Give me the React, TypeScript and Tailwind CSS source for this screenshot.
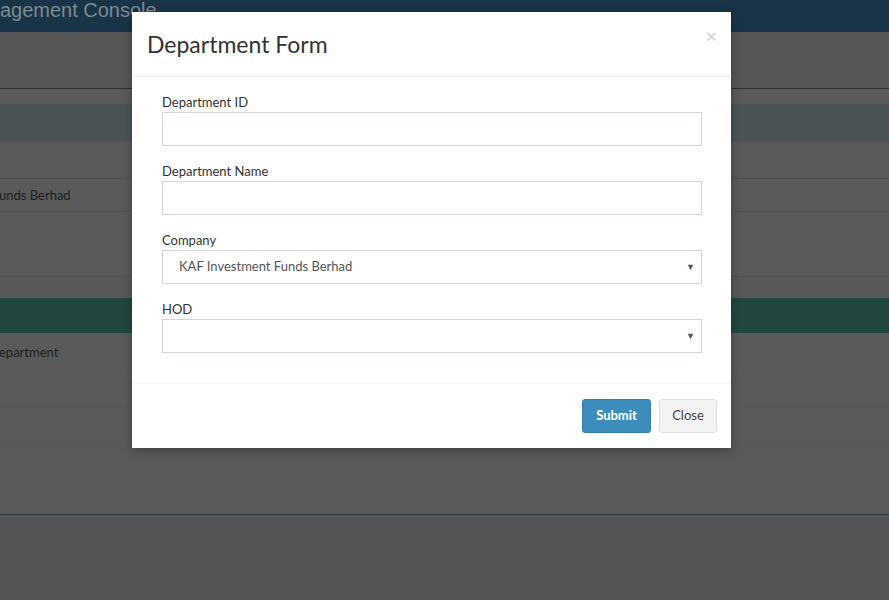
import React from 'react';

const font = { fontFamily: 'Lato, "Open Sans", sans-serif' };

const Caret = () => (
    <span className="pointer-events-none absolute right-[7px] top-1/2 -translate-y-1/2 text-[9px] text-[#555]">▼</span>
);

const Field: React.FC<{ label: string; children: React.ReactNode }> = ({ label, children }) => (
    <div className="mb-[16px]">
        <label className="block text-[13px] leading-[18px] text-[#333] mb-[1px]">{label}</label>
        {children}
    </div>
);

const DepartmentFormModal: React.FC = () => {
    return (
        <div className="absolute left-[132px] top-[12px] w-[599px] bg-white shadow-[0_3px_9px_rgba(0,0,0,0.3)]" style={font}>
            <div className="relative h-[65px] border-b border-[#eeeeee] px-[15px] flex items-center">
                <h4 className="text-[23px] text-[#333] leading-none">Department Form</h4>
                <button className="absolute right-[14px] top-[13px] text-[20px] leading-none text-[#cccccc]">×</button>
            </div>

            <form className="px-[30px] pt-[16px] pb-[14px]">
                <Field label="Department ID">
                    <input className="block w-[540px] h-[34px] border border-[#d2d6de] px-3 text-[13px] outline-none" />
                </Field>
                <Field label="Department Name">
                    <input className="block w-[540px] h-[34px] border border-[#d2d6de] px-3 text-[13px] outline-none" />
                </Field>
                <Field label="Company">
                    <div className="relative w-[540px]">
                        <select
                            defaultValue="kaf"
                            className="block w-full h-[34px] appearance-none border border-[#d2d6de] bg-white pl-[16px] text-[13px] text-[#555] outline-none"
                            style={font}
                        >
                            <option value="kaf">KAF Investment Funds Berhad</option>
                        </select>
                        <Caret />
                    </div>
                </Field>
                <Field label="HOD">
                    <div className="relative w-[540px]">
                        <select
                            defaultValue=""
                            className="block w-full h-[34px] appearance-none border border-[#d2d6de] bg-white pl-[16px] text-[13px] text-[#555] outline-none"
                        >
                            <option value=""></option>
                        </select>
                        <Caret />
                    </div>
                </Field>
            </form>

            <div className="border-t border-[#f4f4f4] px-[14px] py-[15px] flex justify-end gap-[8px]">
                <button className="w-[69px] h-[34px] bg-[#3c8dbc] border border-[#367fa9] rounded-[3px] text-white text-[13px] font-bold">
                    Submit
                </button>
                <button className="w-[58px] h-[34px] bg-[#f4f4f4] border border-[#dddddd] rounded-[3px] text-[#444] text-[13px]">
                    Close
                </button>
            </div>
        </div>
    );
};

export default function App() {
    return (
        <div className="relative w-[889px] h-[600px] overflow-hidden bg-[#545557]" style={font}>
            {/* dimmed page behind the modal */}
            <div className="h-[32px] bg-[#193446] overflow-hidden">
                <div className="-mt-[5px] -ml-[39px] text-[20px] whitespace-nowrap text-[#7c8991]" style={{ fontFamily: '"Liberation Sans", Arial, sans-serif' }}>
                    Management Console
                </div>
            </div>
            <div className="h-[57px] bg-[#555658] border-b border-[#2f3030]"></div>
            <div className="h-[15px] bg-[#5a5a5a]"></div>
            <div className="h-[38px] bg-[#4b5355]"></div>
            <div className="h-[37px] bg-[#5a5a5a] border-b border-[#4f4f4f]"></div>
            <div className="h-[33px] pt-[2px] bg-[#5a5a5a] border-b border-[#4f4f4f] flex items-center overflow-hidden">
                <span className="-ml-[1px] text-[13px] text-[#1e1e1e]">unds Berhad</span>
            </div>
            <div className="h-[65px] bg-[#5a5a5a] border-b border-[#505050]"></div>
            <div className="h-[21px] bg-[#585858]"></div>
            <div className="h-[35px] bg-[#22473f]"></div>
            <div className="h-[40px] bg-[#5a5a5a] border-b border-[#575757] flex items-center overflow-hidden">
                <span className="-ml-[1px] text-[13px] text-[#1e1e1e]">epartment</span>
            </div>
            <div className="h-[35px] bg-[#5a5a5a] border-b border-[#575757]"></div>
            <div className="h-[35px] bg-[#5a5a5a] border-b border-[#575757]"></div>
            <div className="h-[72px] bg-[#5a5a5a] border-b border-[#2f3a40]"></div>

            <DepartmentFormModal />
        </div>
    );
}
